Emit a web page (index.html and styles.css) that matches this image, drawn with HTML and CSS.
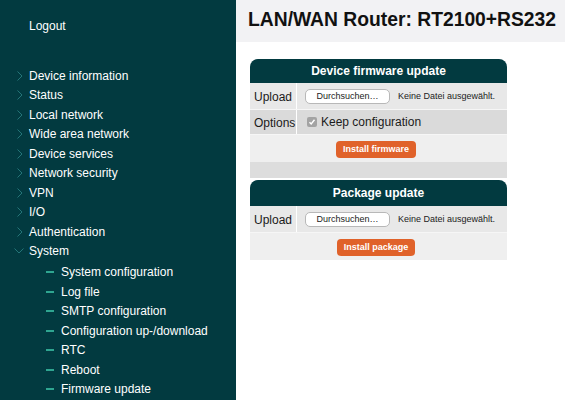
FILE: index.html
```html
<!DOCTYPE html>
<html>
<head>
<meta charset="utf-8">
<link rel="stylesheet" href="styles.css">
</head>
<body>
<div class="page">
  <nav class="sidebar">
    <div class="logout">Logout</div>
    <ul class="menu">
      <li class="item"><svg class="chev" width="6" height="10" viewBox="0 0 6 10"><polyline points="0.5,0.5 5,5 0.5,9.5"/></svg><span>Device information</span></li>
      <li class="item"><svg class="chev" width="6" height="10" viewBox="0 0 6 10"><polyline points="0.5,0.5 5,5 0.5,9.5"/></svg><span>Status</span></li>
      <li class="item"><svg class="chev" width="6" height="10" viewBox="0 0 6 10"><polyline points="0.5,0.5 5,5 0.5,9.5"/></svg><span>Local network</span></li>
      <li class="item"><svg class="chev" width="6" height="10" viewBox="0 0 6 10"><polyline points="0.5,0.5 5,5 0.5,9.5"/></svg><span>Wide area network</span></li>
      <li class="item"><svg class="chev" width="6" height="10" viewBox="0 0 6 10"><polyline points="0.5,0.5 5,5 0.5,9.5"/></svg><span>Device services</span></li>
      <li class="item"><svg class="chev" width="6" height="10" viewBox="0 0 6 10"><polyline points="0.5,0.5 5,5 0.5,9.5"/></svg><span>Network security</span></li>
      <li class="item"><svg class="chev" width="6" height="10" viewBox="0 0 6 10"><polyline points="0.5,0.5 5,5 0.5,9.5"/></svg><span>VPN</span></li>
      <li class="item"><svg class="chev" width="6" height="10" viewBox="0 0 6 10"><polyline points="0.5,0.5 5,5 0.5,9.5"/></svg><span>I/O</span></li>
      <li class="item"><svg class="chev" width="6" height="10" viewBox="0 0 6 10"><polyline points="0.5,0.5 5,5 0.5,9.5"/></svg><span>Authentication</span></li>
      <li class="item open"><svg class="chev-down" width="10" height="6" viewBox="0 0 10 6"><polyline points="0.5,0.5 5,5 9.5,0.5"/></svg><span>System</span></li>
      <li class="sub first"><span class="dash"></span><span>System configuration</span></li>
      <li class="sub"><span class="dash"></span><span>Log file</span></li>
      <li class="sub"><span class="dash"></span><span>SMTP configuration</span></li>
      <li class="sub"><span class="dash"></span><span>Configuration up-/download</span></li>
      <li class="sub"><span class="dash"></span><span>RTC</span></li>
      <li class="sub"><span class="dash"></span><span>Reboot</span></li>
      <li class="sub"><span class="dash"></span><span>Firmware update</span></li>
    </ul>
  </nav>
  <main class="main">
    <header class="topbar">
      <h1 class="title">LAN/WAN Router: RT2100+RS232</h1>
    </header>
    <div class="content">
      <section class="panel">
        <div class="panel-head">Device firmware update</div>
        <div class="row row-a">
          <div class="label">Upload</div>
          <div class="value"><span class="file-btn">Durchsuchen…</span><span class="file-text">Keine Datei ausgewählt.</span></div>
        </div>
        <div class="row row-b">
          <div class="label">Options</div>
          <div class="value"><span class="check"><svg width="8" height="8" viewBox="0 0 8 8"><polyline points="1.5,4.2 3.2,6 6.5,1.8"/></svg></span><span class="opt-text">Keep configuration</span></div>
        </div>
        <div class="action"><span class="btn">Install firmware</span></div>
        <div class="panel-foot"></div>
      </section>
      <section class="panel panel-2">
        <div class="panel-head">Package update</div>
        <div class="row row-a">
          <div class="label">Upload</div>
          <div class="value"><span class="file-btn">Durchsuchen…</span><span class="file-text">Keine Datei ausgewählt.</span></div>
        </div>
        <div class="action"><span class="btn">Install package</span></div>
      </section>
    </div>
  </main>
</div>
</body>
</html>
```
FILE: styles.css
```css
* { box-sizing: border-box; }
html, body { margin: 0; padding: 0; }
body {
  font-family: "Liberation Sans", Arial, Helvetica, sans-serif;
  background: #ffffff;
  color: #1a1a1a;
}
.page {
  display: flex;
  min-height: 400px;
}
.sidebar {
  width: 236px;
  flex: 0 0 236px;
  background: #023a40;
  color: #ffffff;
  min-height: 400px;
}
.logout {
  font-size: 12px;
  line-height: 14px;
  padding: 19px 0 0 29px;
}
.menu {
  list-style: none;
  margin: 33px 0 0 0;
  padding: 0;
}
.item, .sub {
  display: flex;
  align-items: center;
  height: 19.5px;
  font-size: 12px;
  line-height: 14px;
}
.item { padding-left: 17px; }
.sub.first { margin-top: 1.5px; }
.chev {
  width: 6px;
  height: 10px;
  margin-right: 6px;
  fill: none;
  stroke: #247578;
  stroke-width: 1;
}
.chev-down {
  width: 10px;
  height: 6px;
  margin-left: -3px;
  margin-right: 5px;
  fill: none;
  stroke: #247578;
  stroke-width: 1;
}
.sub { padding-left: 46px; }
.dash {
  display: inline-block;
  width: 8px;
  height: 2px;
  background: #2fa590;
  margin-right: 7px;
}
.main {
  flex: 1;
  display: flex;
  flex-direction: column;
}
.topbar {
  background: #f2f2f4;
  height: 42px;
  display: flex;
  align-items: center;
  padding-left: 12px;
}
.title {
  margin: 0;
  font-size: 19.3px;
  font-weight: bold;
  color: #111111;
  line-height: 22px;
  position: relative;
  top: -1px;
}
.content {
  padding: 17px 0 0 14px;
}
.panel {
  width: 257px;
}
.panel-2 { margin-top: 2px; }
.panel-head {
  background: #023a40;
  color: #ffffff;
  font-weight: bold;
  font-size: 12px;
  text-align: center;
  height: 24px;
  line-height: 24px;
  border-radius: 8px 8px 0 0;
}
.panel-2 .panel-head { height: 26px; line-height: 26px; }
.row {
  display: grid;
  grid-template-columns: 47px 1fr;
  border-bottom: 1px solid #f6f6f6;
}
.row-a { background: #e8e8e8; height: 27px; }
.row-b { background: #dadada; height: 25px; }
.label {
  border-right: 1px solid #ffffff;
  font-size: 12px;
  display: flex;
  align-items: center;
  padding-left: 4px;
  padding-top: 1px;
  color: #1a1a1a;
}
.value {
  display: flex;
  align-items: center;
  padding-left: 8px;
}
.file-btn {
  display: inline-block;
  width: 85px;
  height: 15px;
  line-height: 13px;
  border: 1px solid #b8b8b8;
  border-radius: 5px;
  background: #ffffff;
  font-size: 9px;
  text-align: center;
  color: #222;
}
.file-text {
  font-size: 9px;
  margin-left: 8px;
  color: #222;
}
.check {
  width: 10px;
  height: 10px;
  border-radius: 2px;
  background: #a3a3a3;
  display: inline-flex;
  align-items: center;
  justify-content: center;
  margin-left: 2px;
}
.check svg {
  fill: none;
  stroke: #ffffff;
  stroke-width: 1.4;
}
.opt-text {
  font-size: 12px;
  margin-left: 4px;
  color: #1a1a1a;
}
.action {
  background: #efefef;
  height: 27px;
  display: flex;
  align-items: center;
  justify-content: center;
  padding-top: 2px;
}
.btn {
  display: inline-block;
  background: #e0622a;
  color: #ffffff;
  font-weight: bold;
  font-size: 9px;
  height: 17px;
  line-height: 17px;
  padding: 0 7px;
  border-radius: 4px;
  margin-left: -5px;
}
.panel-foot {
  background: #dddddd;
  height: 16px;
}
```
